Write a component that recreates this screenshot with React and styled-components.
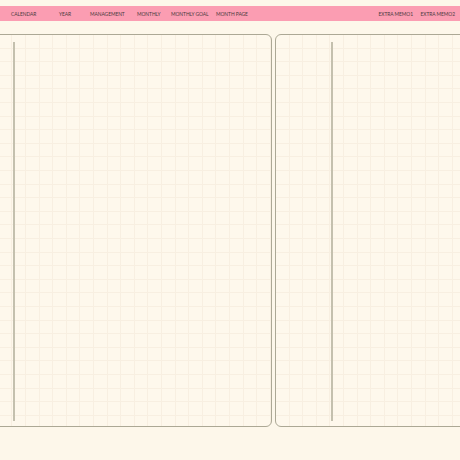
import React from 'react'
import styled, { createGlobalStyle } from 'styled-components'

const GlobalStyle = createGlobalStyle`
  html, body {
    margin: 0;
    padding: 0;
    background: #fdf7ea;
  }
`

const Page = styled.div`
  width: 460px;
  height: 460px;
  overflow: hidden;
  background: #fdf7ea;
  padding-top: 6px;
  box-sizing: border-box;
`

const NavBar = styled.nav`
  height: 15px;
  background: #fb9db2;
  display: flex;
  align-items: center;
  padding: 0 5px 0 11px;
  font-family: Lato, "Liberation Sans", sans-serif;
  font-size: 4.9px;
  letter-spacing: -0.05px;
  color: #4a3a3e;
`

const NavItem = styled.span`
  flex: 0 0 ${({ $w }) => ($w ? `${$w}px` : 'auto')};
  white-space: nowrap;
  margin-left: ${({ $push }) => ($push ? 'auto' : '0')};
`

const Spread = styled.div`
  display: flex;
  gap: 3px;
  margin-top: 13px;
  margin-left: -43px;
`

const Sheet = styled.div`
  flex: 0 0 315px;
  height: 393px;
  box-sizing: border-box;
  border: 1.5px solid #aca895;
  border-radius: 6px;
  background-color: #fef8ec;
  background-image:
    repeating-linear-gradient(
      to right,
      transparent 0,
      transparent 12.6px,
      #f8efe1 12.6px,
      #f8efe1 13.6px
    ),
    repeating-linear-gradient(
      to bottom,
      transparent 0,
      transparent 12.6px,
      #f8efe1 12.6px,
      #f8efe1 13.6px
    );
  display: flex;
  padding: 7px 0 5px 55px;
`

const MarginLine = styled.div`
  width: 1.5px;
  background: #c4c0ae;
`

const links = [
  ['CALENDAR', 48],
  ['YEAR', 31],
  ['MANAGEMENT', 47],
  ['MONTHLY', 34],
  ['MONTHLY GOAL', 45],
  ['MONTH PAGE', 0],
]

export default function App() {
  return (
    <Page>
      <GlobalStyle />
      <NavBar>
        {links.map(([label, w]) => (
          <NavItem key={label} $w={w}>
            {label}
          </NavItem>
        ))}
        <NavItem $push $w={42}>EXTRA MEMO1</NavItem>
        <NavItem>EXTRA MEMO2</NavItem>
      </NavBar>
      <Spread>
        <Sheet>
          <MarginLine />
        </Sheet>
        <Sheet>
          <MarginLine />
        </Sheet>
      </Spread>
    </Page>
  )
}
